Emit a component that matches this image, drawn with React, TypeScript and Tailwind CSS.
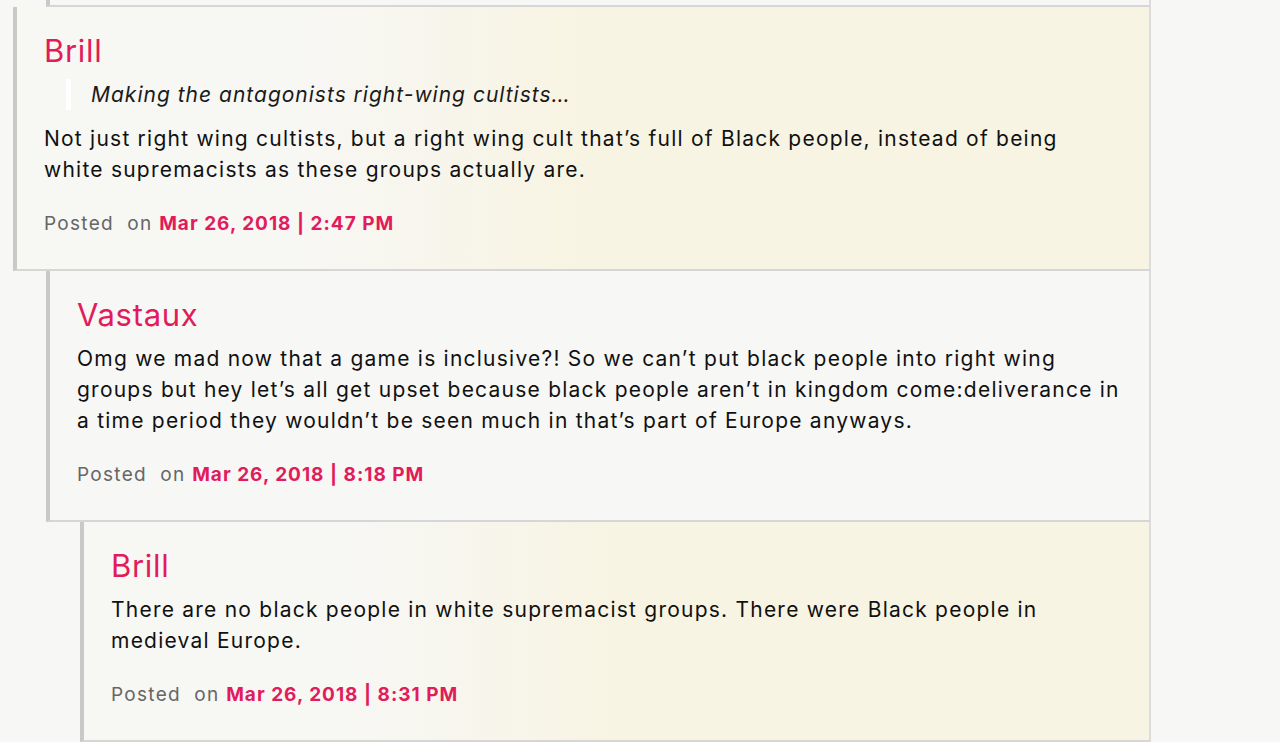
import React from 'react'

type Comment = {
  id: number
  author: string
  quote?: string
  lines: string[]
  date: string
  indent: string
  tinted: boolean
}

const comments: Comment[] = [
  {
    id: 1,
    author: 'Brill',
    quote: 'Making the antagonists right-wing cultists…',
    lines: [
      'Not just right wing cultists, but a right wing cult that’s full of Black people, instead of being',
      'white supremacists as these groups actually are.',
    ],
    date: 'Mar 26, 2018 | 2:47 PM',
    indent: 'ml-[13px]',
    tinted: true,
  },
  {
    id: 2,
    author: 'Vastaux',
    lines: [
      'Omg we mad now that a game is inclusive?! So we can’t put black people into right wing',
      'groups but hey let’s all get upset because black people aren’t in kingdom come:deliverance in',
      'a time period they wouldn’t be seen much in that’s part of Europe anyways.',
    ],
    date: 'Mar 26, 2018 | 8:18 PM',
    indent: 'ml-[46px]',
    tinted: false,
  },
  {
    id: 3,
    author: 'Brill',
    lines: [
      'There are no black people in white supremacist groups. There were Black people in',
      'medieval Europe.',
    ],
    date: 'Mar 26, 2018 | 8:31 PM',
    indent: 'ml-[80px]',
    tinted: true,
  },
]

function CommentBox({ c }: { c: Comment }) {
  return (
    <div
      className={`${c.indent} border-l-4 border-l-[#c9c9c9] border-r-2 border-r-[#dcdcdc] border-b-2 border-b-[#d6d6d6] pl-[27px] pr-6 pt-[26px] pb-[31px] ${
        c.tinted
          ? 'bg-linear-to-r from-[#f7f7f4] from-25% to-[#f8f4e3] to-50%'
          : 'bg-[#f7f7f5]'
      }`}
    >
      <div className="text-[31px] leading-[36px] tracking-[0.7px] text-[#e21b5a] mb-[10px]">{c.author}</div>
      {c.quote && (
        <div className="ml-[22px] border-l-[5px] border-white pl-[20px] mb-[13px] italic text-[21px] leading-[31px] tracking-[1px] text-[#1a1a1a]">
          {c.quote}
        </div>
      )}
      <p className="text-[21px] leading-[31px] tracking-[1.23px] text-[#111] whitespace-nowrap">
        {c.lines.map((l, i) => (
          <React.Fragment key={i}>
            {l}
            {i < c.lines.length - 1 && <br />}
          </React.Fragment>
        ))}
      </p>
      <div className="mt-[25px] text-[19px] leading-[28px] tracking-[1.3px] text-[#666]">
        Posted&nbsp; on{' '}
        <span className="font-bold tracking-[1px] text-[#e21b5a]">{c.date}</span>
      </div>
    </div>
  )
}

export default function App() {
  return (
    <div
      className="h-[742px] w-[1280px] overflow-hidden bg-[#f7f7f5]"
      style={{ fontFamily: 'Inter, "Noto Sans", sans-serif' }}
    >
      <div className="w-[1151px]">
        {/* tail of the parent comment */}
        <div className="ml-[46px] h-[7px] border-l-4 border-l-[#c9c9c9] border-r-2 border-r-[#dcdcdc] border-b-2 border-b-[#d6d6d6]" />
        {comments.map((c) => (
          <CommentBox key={c.id} c={c} />
        ))}
        {/* next reply starts below */}
        <div className="ml-[113px] h-6 border-l-4 border-l-[#c9c9c9]" />
      </div>
    </div>
  )
}
